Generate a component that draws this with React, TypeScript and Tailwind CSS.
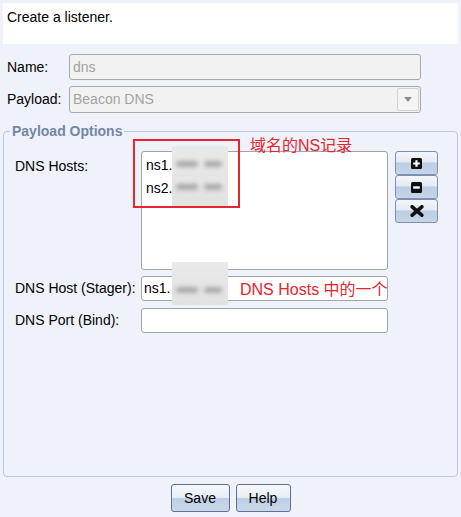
import { useState } from "react"

const font = "font-['Liberation_Sans',Arial,'Noto_Sans_CJK_SC',sans-serif]"

function ToolButton({ children }: { children: React.ReactNode }) {
  return (
    <button className="flex h-[24px] w-[43px] items-center justify-center rounded-[3px] border border-[#7d90ae] bg-[linear-gradient(to_bottom,#f3f6fb_0%,#e4ebf5_45%,#bccde3_50%,#c6d5e8_100%)]">
      {children}
    </button>
  )
}

function FormButton({ label, width }: { label: string; width: string }) {
  return (
    <button
      className={`${width} h-[28px] rounded-[3px] border border-[#5f7190] bg-[linear-gradient(to_bottom,#f5f8fc_0%,#e8eef7_48%,#bfcfe4_52%,#cad8ea_100%)] text-[14px] text-black`}
    >
      {label}
    </button>
  )
}

// grey smear over the redacted part of the domain
function Smear({ lines, className }: { lines: number; className: string }) {
  return (
    <div className={`absolute w-[56px] bg-[linear-gradient(to_bottom,#e9e9e9,#e2e2e2)] ${className}`}>
      {Array.from({ length: lines }).map((_, i) => (
        <div key={i} className="flex h-[23px] items-center gap-[6px] pl-[4px] blur-[2px]">
          <span className="h-[6px] w-[22px] rounded-full bg-[#a9a9a9]" />
          <span className="h-[6px] w-[18px] rounded-full bg-[#a9a9a9]" />
        </div>
      ))}
    </div>
  )
}

export default function App() {
  const [hosts] = useState(["ns1.", "ns2."])

  return (
    <div className={`${font} relative flex h-[517px] w-[461px] flex-col bg-[#eff2fa] p-[3px] text-[14px] text-black`}>
      {/* header */}
      <div className="h-[41px] bg-white pl-[4px] pt-[6px] leading-[16px]">Create a listener.</div>

      {/* top form */}
      <div className="mt-[10px] flex h-[26px] items-center">
        <span className="w-[66px] pl-[4px]">Name:</span>
        <div className="flex h-full w-[352px] items-center rounded-[3px] border border-[#a9a9a9] bg-[#f2f2f2] pl-[3px] text-[#a3a3a3]">
          dns
        </div>
      </div>
      <div className="mt-[6px] flex h-[27px] items-center">
        <span className="w-[66px] pl-[4px]">Payload:</span>
        <div className="flex h-full w-[352px] items-center justify-between rounded-[3px] border border-[#a9a9a9] bg-[#f2f2f2] pl-[3px] pr-[1px] text-[#a3a3a3]">
          <span>Beacon DNS</span>
          <span className="flex h-[23px] w-[22px] items-center justify-center rounded-[2px] border border-[#d2d2d2] bg-[#f4f4f4]">
            <svg width="8" height="5" viewBox="0 0 8 5">
              <path d="M0 0h8L4 5z" fill="#8c8c8c" />
            </svg>
          </span>
        </div>
      </div>

      {/* payload options */}
      <fieldset className="mt-[10px] flex-1 rounded-[4px] border border-[#b9c9e1] pb-0 pl-[6px] pr-0 pt-[12px]">
        <legend className="px-[2px] text-[14px] font-bold leading-[16px] text-[#7487a7]">Payload Options</legend>
        <div className="pl-[5px]">
          <div className="flex">
            <span className="w-[126px] pt-[5px]">DNS Hosts:</span>
            <div className="h-[119px] w-[247px] rounded-[3px] border border-[#a4a4a4] bg-white pl-[4px] pt-[2px] leading-[23px]">
              {hosts.map((h) => (
                <div key={h}>{h}</div>
              ))}
            </div>
            <div className="ml-[7px] flex flex-col">
              <ToolButton>
                <svg width="11" height="11" viewBox="0 0 11 11">
                  <rect width="11" height="11" rx="1.5" fill="#111" />
                  <path d="M5.5 2.2v6.6M2.2 5.5h6.6" stroke="#fff" strokeWidth="2.2" />
                </svg>
              </ToolButton>
              <ToolButton>
                <svg width="11" height="11" viewBox="0 0 11 11">
                  <rect width="11" height="11" rx="1.5" fill="#111" />
                  <path d="M2.2 5.5h6.6" stroke="#fff" strokeWidth="2.4" />
                </svg>
              </ToolButton>
              <ToolButton>
                <svg width="14" height="12" viewBox="0 0 14 12">
                  <path d="M2.2 1.8l9.6 8.4M11.8 1.8l-9.6 8.4" stroke="#111" strokeWidth="3.6" strokeLinecap="round" />
                </svg>
              </ToolButton>
            </div>
          </div>

          <div className="mt-[6px] flex h-[25px] items-center">
            <span className="w-[126px]">DNS Host (Stager):</span>
            <div className="flex h-full w-[247px] items-center rounded-[3px] border border-[#a4a4a4] bg-white pl-[2px]">ns1.</div>
          </div>
          <div className="mt-[7px] flex h-[25px] items-center">
            <span className="w-[126px]">DNS Port (Bind):</span>
            <div className="h-full w-[247px] rounded-[3px] border border-[#a4a4a4] bg-white" />
          </div>
        </div>
      </fieldset>

      {/* actions */}
      <div className="mb-[2px] mt-[7px] flex justify-center gap-[6px]">
        <FormButton label="Save" width="w-[59px]" />
        <FormButton label="Help" width="w-[55px]" />
      </div>

      <Smear lines={2} className="left-[172px] top-[146px] h-[60px] pt-[6px]" />
      <Smear lines={1} className="left-[172px] top-[262px] h-[43px] pt-[16px]" />

      {/* red annotations */}
      <div className="absolute left-[133px] top-[139px] h-[69px] w-[107px] border-2 border-[#e8242c]" />
      <div className="absolute left-[250px] top-[135px] text-[16px] leading-[22px] text-[#e8242c]">域名的NS记录</div>
      <div className="absolute left-[240px] top-[279px] text-[16px] leading-[22px] text-[#e8242c]">DNS Hosts 中的一个</div>
    </div>
  )
}
